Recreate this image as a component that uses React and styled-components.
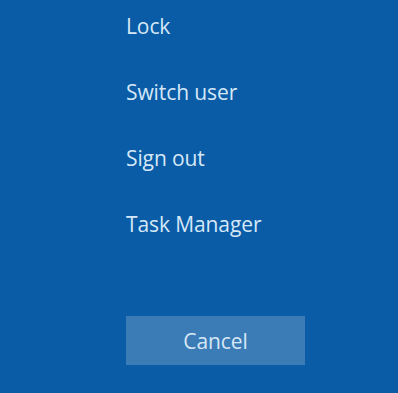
import React from 'react'
import styled, { createGlobalStyle } from 'styled-components'

const GlobalStyle = createGlobalStyle`
  html, body {
    margin: 0;
    padding: 0;
    background: #0a5ca7;
  }
`

const Screen = styled.div`
  width: 398px;
  height: 393px;
  background: #0a5ca7;
  font-family: "Open Sans", "Noto Sans", sans-serif;
  color: #d6e8f7;
  display: flex;
  flex-direction: column;
  padding-left: 126px;
  box-sizing: border-box;
  overflow: hidden;
`

const Menu = styled.div`
  display: flex;
  flex-direction: column;
  padding-top: 12px;
  gap: 38px;
`

const MenuItem = styled.div`
  font-size: 21px;
  line-height: 28px;
  height: 28px;
  letter-spacing: -0.1px;
  cursor: pointer;
`

const CancelButton = styled.button`
  margin-top: 78px;
  width: 179px;
  height: 49px;
  border: none;
  background: #3b7bb6;
  color: #d6e8f7;
  font-family: "Open Sans", "Noto Sans", sans-serif;
  font-size: 21px;
  letter-spacing: -0.1px;
  padding: 0;
  cursor: pointer;
`

const items = ['Lock', 'Switch user', 'Sign out', 'Task Manager']

export default function App() {
  return (
    <>
      <GlobalStyle />
      <Screen>
        <Menu>
          {items.map(item => (
            <MenuItem key={item}>{item}</MenuItem>
          ))}
        </Menu>
        <CancelButton>Cancel</CancelButton>
      </Screen>
    </>
  )
}
